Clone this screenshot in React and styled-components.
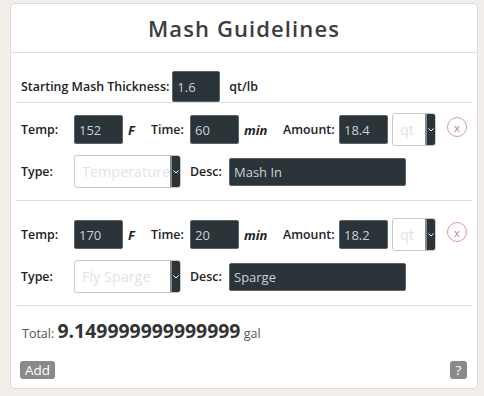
import styled, { createGlobalStyle } from "styled-components";

const GlobalStyle = createGlobalStyle`
  body {
    margin: 0;
    background: #f2efea;
    font-family: "Open Sans", "Noto Sans", sans-serif;
    color: #222;
  }
`;

const steps = [
  { temp: "152", time: "60", amount: "18.4", type: "Temperature", desc: "Mash In" },
  { temp: "170", time: "20", amount: "18.2", type: "Fly Sparge", desc: "Sparge" },
];

const App = () => (
  <>
    <GlobalStyle />
    <Card>
      <Header>
        <Title>Mash Guidelines</Title>
      </Header>
      <Body>
        <ThicknessRow>
          <Label>Starting Mash Thickness:</Label>
          <Field $w={48} $h={31}>1.6</Field>
          <Label $ml={9}>qt/lb</Label>
        </ThicknessRow>
        {steps.map((s, i) => (
          <Step key={i} $first={i === 0}>
            <Row>
              <Label $w={53}>Temp:</Label>
              <Field $w={49}>{s.temp}</Field>
              <Unit $w={28}>F</Unit>
              <Label $w={39}>Time:</Label>
              <Field $w={49}>{s.time}</Field>
              <Unit $w={44}>min</Unit>
              <Label $w={56}>Amount:</Label>
              <Field $w={49}>{s.amount}</Field>
              <Select $w={44} $ml={4}>
                <SelectText>qt</SelectText>
                <Arrow>
                  <Chevron />
                </Arrow>
              </Select>
              <Remove>x</Remove>
            </Row>
            <Row>
              <Label $w={53}>Type:</Label>
              <Select $w={107}>
                <SelectText>{s.type}</SelectText>
                <Arrow>
                  <Chevron />
                </Arrow>
              </Select>
              <Label $w={39} $ml={9}>Desc:</Label>
              <Field $w={177} $h={28}>{s.desc}</Field>
            </Row>
          </Step>
        ))}
        <Total>
          Total: <Big>9.149999999999999</Big> gal
        </Total>
        <Footer>
          <SmallButton>Add</SmallButton>
          <SmallButton>?</SmallButton>
        </Footer>
      </Body>
    </Card>
  </>
);

const Chevron = () => (
  <svg width="6" height="4" viewBox="0 0 6 4">
    <path d="M0.5 0.5 L3 3 L5.5 0.5" stroke="#fff" strokeWidth="1" fill="none" />
  </svg>
);

const Card = styled.div`
  margin: 3px 6px 0 10px;
  height: 386px;
  box-sizing: border-box;
  background: #fff;
  border: 1px solid #dcdcdc;
  border-radius: 5px;
  display: flex;
  flex-direction: column;
`;

const Header = styled.div`
  height: 48px;
  border-bottom: 1px solid #dcdcdc;
  display: flex;
  align-items: center;
  justify-content: center;
`;

const Title = styled.h1`
  margin: 0;
  font-size: 22px;
  font-weight: 600;
  letter-spacing: 1.1px;
  color: #3d3d3d;
`;

const Body = styled.div`
  flex: 1;
  padding: 0 5px;
  display: flex;
  flex-direction: column;
`;

const ThicknessRow = styled.div`
  display: flex;
  align-items: center;
  padding: 18px 5px 0;
  height: 31px;
  box-sizing: content-box;
  border-bottom: 1px solid #dcdcdc;
`;

const Step = styled.div`
  padding: ${(p) => (p.$first ? 10 : 17)}px 5px 12px;
  border-bottom: 1px solid #dcdcdc;
  display: flex;
  flex-direction: column;
  gap: 9px;
`;

const Row = styled.div`
  display: flex;
  align-items: center;
  height: 33px;
`;

const Label = styled.span`
  width: ${(p) => (p.$w ? `${p.$w}px` : "auto")};
  margin-left: ${(p) => p.$ml || 0}px;
  margin-right: ${(p) => (p.$w ? 0 : 3)}px;
  flex-shrink: 0;
  font-size: 12.4px;
  font-weight: 600;
  color: #222;
`;

const Unit = styled.span`
  width: ${(p) => p.$w}px;
  padding-left: 5px;
  box-sizing: border-box;
  font-size: 13px;
  font-weight: 700;
  font-style: italic;
  color: #222;
`;

const Field = styled.div`
  width: ${(p) => p.$w}px;
  height: ${(p) => p.$h || 29}px;
  box-sizing: border-box;
  flex-shrink: 0;
  background: #2b3439;
  border: 1px solid #5c6266;
  border-radius: 2px;
  color: #c9d1d6;
  font-size: 13px;
  padding-left: 4px;
  display: flex;
  align-items: center;
`;

const Select = styled.div`
  width: ${(p) => p.$w}px;
  height: 33px;
  box-sizing: border-box;
  flex-shrink: 0;
  margin-left: ${(p) => p.$ml || 0}px;
  border: 1px solid #c8c8c8;
  border-radius: 3px;
  display: flex;
  overflow: hidden;
  background: #fff;
`;

const SelectText = styled.span`
  flex: 1;
  overflow: hidden;
  white-space: nowrap;
  padding-left: 7px;
  font-size: 14.4px;
  color: #dde5ea;
  display: flex;
  align-items: center;
`;

const Arrow = styled.span`
  width: 8px;
  flex-shrink: 0;
  background: #2b3439;
  border-left: 2px solid #888;
  display: flex;
  align-items: center;
  justify-content: center;
`;

const Remove = styled.span`
  width: 20px;
  height: 20px;
  box-sizing: border-box;
  margin-left: 11px;
  margin-top: -5px;
  border: 1px solid #d99a98;
  border-radius: 50%;
  color: #c27a9a;
  font-size: 11px;
  line-height: 15px;
  display: flex;
  align-items: center;
  justify-content: center;
`;

const Total = styled.div`
  padding: 11px 5px 0 6px;
  font-size: 12.5px;
  color: #555;
`;

const Big = styled.span`
  font-size: 19.4px;
  font-weight: 700;
  color: #333;
`;

const Footer = styled.div`
  margin-top: auto;
  padding: 0 5px 9px 4px;
  display: flex;
  justify-content: space-between;
  align-items: flex-end;
`;

const SmallButton = styled.span`
  height: 18px;
  min-width: 17px;
  box-sizing: border-box;
  padding: 0 5px;
  background: #8a8a8a;
  color: #fff;
  border-radius: 3px;
  font-size: 13.5px;
  line-height: 18px;
  text-align: center;
`;

export default App;
